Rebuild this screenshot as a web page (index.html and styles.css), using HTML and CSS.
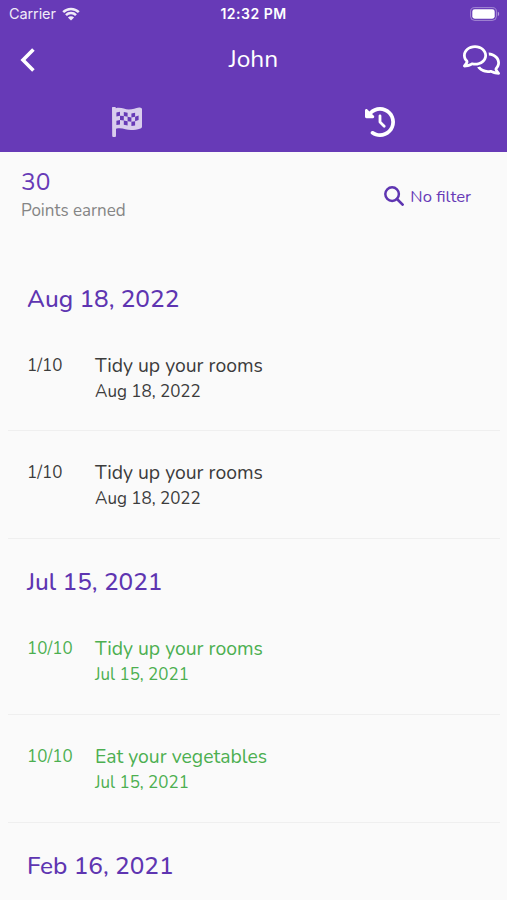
FILE: index.html
```
<!DOCTYPE html>
<html lang="en">
<head>
  <meta charset="UTF-8" />
  <meta name="viewport" content="width=device-width, initial-scale=1" />
  <title>John</title>
  <link rel="stylesheet" href="styles.css">
</head>
<body>
  <header class="header">
    <div class="status-bar">
      <div class="carrier">
        <span>Carrier</span>
        <svg class="wifi" viewBox="0 0 18 14">
          <path d="M1.2 5.2a11 11 0 0 1 15.6 0M4 8.2a7 7 0 0 1 10 0" fill="none" stroke="#fff" stroke-width="2.5" />
          <path d="M9 13.6 5.9 10.5a4.4 4.4 0 0 1 6.2 0z" fill="#fff" />
        </svg>
      </div>
      <span class="clock">12:32 PM</span>
      <svg class="battery" viewBox="0 0 30 14">
        <rect x="0.6" y="0.6" width="25.8" height="12.8" rx="4" fill="none" stroke="#fff" stroke-opacity="0.4" />
        <rect x="2.3" y="2.3" width="22.4" height="9.4" rx="2.4" fill="#fff" />
        <path d="M27.8 4.8c1.8.6 1.8 3.8 0 4.4z" fill="#fff" fill-opacity="0.5" />
      </svg>
    </div>
    <nav class="nav">
      <svg class="back" viewBox="0 0 16 26">
        <path d="M13.4 2.6 3 13l10.4 10.4" fill="none" stroke="#fff" stroke-width="3.6" />
      </svg>
      <h1 class="name">John</h1>
      <svg class="comments" viewBox="0 0 640 512">
        <path d="M88.2 309.1c9.8-18.3 6.8-40.8-7.5-55.8C59.4 230.9 48 204 48 176c0-63.5 63.8-128 160-128s160 64.5 160 128s-63.8 128-160 128c-13.1 0-25.8-1.3-37.8-3.6c-10.4-2-21.2-.6-30.7 4.2c-4.1 2.1-8.3 4.1-12.6 6c-16 7.2-32.9 13.5-49.9 18c2.8-4.6 5.4-9.1 7.9-13.6c1.1-1.9 2.2-3.9 3.2-5.9zM208 352c114.9 0 208-78.8 208-176S322.9 0 208 0S0 78.8 0 176c0 41.8 17.2 80.1 45.9 110.3c-.9 1.7-1.9 3.5-2.8 5.1c-10.3 18.4-22.3 36.5-36.6 52.1c-6.6 7-8.3 17.2-4.6 25.9C5.8 378.3 14.4 384 24 384c43 0 86.5-13.3 122.7-29.7c4.8-2.2 9.6-4.5 14.2-6.8c15.1 3 30.9 4.5 47.1 4.5zM432 480c16.2 0 31.9-1.6 47.1-4.5c4.6 2.3 9.4 4.6 14.2 6.8C529.5 498.7 573 512 616 512c9.6 0 18.2-5.7 22-14.5c3.8-8.8 2-19-4.6-25.9c-14.2-15.6-26.2-33.7-36.6-52.1c-.9-1.7-1.9-3.4-2.8-5.1C622.8 384.1 640 345.8 640 304c0-94.4-87.9-171.5-198.2-175.8c4.1 15.2 6.2 31.2 6.2 47.8l0 .6c87.2 6.7 144 67.5 144 127.4c0 28-11.4 54.9-32.7 77.2c-14.3 15-17.3 37.6-7.5 55.8c1.1 2 2.2 4 3.2 5.9c2.5 4.5 5.2 9 7.9 13.6c-17-4.5-33.9-10.7-49.9-18c-4.3-1.9-8.5-3.9-12.6-6c-9.5-4.8-20.3-6.2-30.7-4.2c-12.1 2.4-24.7 3.6-37.8 3.6c-61.7 0-110-26.5-136.8-62.3c-16 5.4-32.8 9.4-50 11.8C279 439.8 350 480 432 480z" fill="#fff" />
      </svg>
    </nav>
    <div class="tabs">
      <div class="tab inactive">
        <svg viewBox="0 0 30 30">
          <path d="M0 1.3a1.7 1.7 0 0 1 3.8 0c5-1.6 8.4 1.2 13 1.2 3.9 0 7-1.3 10.3-2 1.4-.3 2.9.4 2.9 1.8v17.2c0 1-.6 1.7-1.5 2-3.2 1-6.3 1.600-9.500 1.600-5.200 0-8.800-3.100-15-1.400v6.700a1.900 1.900 0 0 1-3.800 0z" fill="#fff" />
          <g fill="#673ab7">
            <path d="M4.400 5.400 8 4.700v4l-3.600.7zM11.800 4.900l3.800.9v4l-3.800-.9zM19.400 6.400l3.700-.6v4l-3.700.6z" />
            <path d="M8 8.700l3.800.2v4.500l-3.800-.3zM15.600 9.800l3.800.6v4.400l-3.800-.5zM23.100 9.800l3.500-1.200v4.400l-3.500 1.200z" />
            <path d="M4.400 13.800l3.600-.7v4.300l-3.600.7zM11.800 13.400l3.800.9v4.300l-3.800-.9zM19.400 14.800l3.700-.6v4.300l-3.700.6z" />
          </g>
        </svg>
      </div>
      <div class="tab">
        <svg viewBox="0 0 512 512">
          <path d="M75 75L41 41C25.900 25.900 0 36.600 0 57.900V168c0 13.300 10.700 24 24 24H134.100c21.400 0 32.100-25.900 17-41l-30.800-30.800C155 85.500 203 64 256 64c106 0 192 86 192 192s-86 192-192 192c-40.800 0-78.600-12.700-109.700-34.400c-14.500-10.100-34.400-6.600-44.600 7.900s-6.600 34.400 7.900 44.600C151.200 495 201.700 512 256 512c141.400 0 256-114.600 256-256S397.400 0 256 0C185.300 0 121.300 28.700 75 75zm181 53c-13.300 0-24 10.700-24 24V256c0 6.400 2.500 12.500 7 17l72 72c9.400 9.400 24.600 9.400 33.900 0s9.400-24.600 0-33.900l-65-65V152c0-13.300-10.700-24-24-24z" fill="#fff" />
        </svg>
      </div>
    </div>
  </header>

  <main>
    <div class="summary">
      <div class="points">
        <div class="points-number">30</div>
        <div class="points-label">Points earned</div>
      </div>
      <div class="filter">
        <svg class="search" viewBox="0 0 20 20">
          <circle cx="8.1" cy="8.1" r="6.8" fill="none" stroke="#5e35b1" stroke-width="2.5" />
          <path d="M13 13l5.600 5.600" stroke="#5e35b1" stroke-width="2.7" stroke-linecap="round" />
        </svg>
        <span>No filter</span>
      </div>
    </div>

    <section class="day">
      <h2>Aug 18, 2022</h2>
      <div class="task">
        <div class="score">1/10</div>
        <div class="info">
          <div class="title">Tidy up your rooms</div>
          <div class="date">Aug 18, 2022</div>
        </div>
      </div>
      <div class="task">
        <div class="score">1/10</div>
        <div class="info">
          <div class="title">Tidy up your rooms</div>
          <div class="date">Aug 18, 2022</div>
        </div>
      </div>
    </section>

    <section class="day">
      <h2>Jul 15, 2021</h2>
      <div class="task done">
        <div class="score">10/10</div>
        <div class="info">
          <div class="title">Tidy up your rooms</div>
          <div class="date">Jul 15, 2021</div>
        </div>
      </div>
      <div class="task done">
        <div class="score">10/10</div>
        <div class="info">
          <div class="title">Eat your vegetables</div>
          <div class="date">Jul 15, 2021</div>
        </div>
      </div>
    </section>

    <section class="day">
      <h2>Feb 16, 2021</h2>
    </section>
  </main>
</body>
</html>
```
FILE: styles.css
```
* {
  margin: 0;
  padding: 0;
  box-sizing: border-box;
}
body {
  height: 900px;
  overflow: hidden;
  background: #fafafa;
  font-family: Nunito, "Noto Sans", sans-serif;
  color: #3c3c3c;
}
svg {
  display: block;
}
.header {
  height: 152px;
  background: #673ab7;
  color: #fff;
}
/* Status bar */
.status-bar {
  display: grid;
  grid-template-columns: 1fr auto 1fr;
  align-items: center;
  height: 27px;
  padding: 0 7px;
  font-family: Inter, sans-serif;
  font-size: 14.5px;
}
.carrier {
  display: flex;
  align-items: center;
  gap: 6px;
  padding-left: 2px;
  opacity: 0.9;
}
.wifi {
  width: 18px;
  height: 14px;
}
.carrier span {
  letter-spacing: -0.1px;
}
.clock {
  font-weight: 600;
  font-size: 14px;
  letter-spacing: 0.5px;
}
.battery {
  width: 30px;
  height: 14px;
  justify-self: end;
}
/* Title row */
.nav {
  display: grid;
  grid-template-columns: 1fr auto 1fr;
  align-items: center;
  height: 65px;
  padding: 0 7px;
}
.back {
  width: 16px;
  height: 26px;
  margin-left: 13px;
}
.name {
  padding-bottom: 2px;
  font-size: 24.5px;
  font-weight: 400;
}
.comments {
  width: 37px;
  height: 30px;
  justify-self: end;
}
.tabs {
  display: grid;
  grid-template-columns: 1fr 1fr;
  height: 60px;
}
.tab {
  display: flex;
  justify-content: center;
  padding-top: 15px;
}
.tab svg {
  width: 30px;
  height: 30px;
}
.inactive svg {
  opacity: 0.75;
}
/* Points and filter */
.summary {
  display: flex;
  justify-content: space-between;
  height: 103.8px;
  padding: 14px 36px 0 21px;
}
.points-number {
  font-size: 24.5px;
  line-height: 33px;
  color: #673ab7;
}
.points-label {
  font-size: 17px;
  line-height: 24px;
  color: #858585;
}
.filter {
  display: flex;
  align-items: center;
  gap: 6px;
  height: 60px;
  font-size: 16.7px;
  color: #673ab7;
}
.search {
  width: 20px;
  height: 20px;
}
/* List */
.day h2 {
  height: 68px;
  padding: 9px 27px 0;
  font-size: 24.4px;
  font-weight: 500;
  line-height: 68px;
  color: #5e35b1;
}
.task {
  display: flex;
  height: 107.7px;
  margin: 0 7px 0 8px;
  padding: 29px 19px 0;
  border-bottom: 1px solid #efefef;
}
.score {
  width: 68px;
  font-size: 17px;
  line-height: 25px;
}
.title {
  font-size: 19.4px;
  line-height: 26px;
}
.date {
  font-size: 17px;
  line-height: 26px;
}
.done {
  color: #4caf50;
}
```
